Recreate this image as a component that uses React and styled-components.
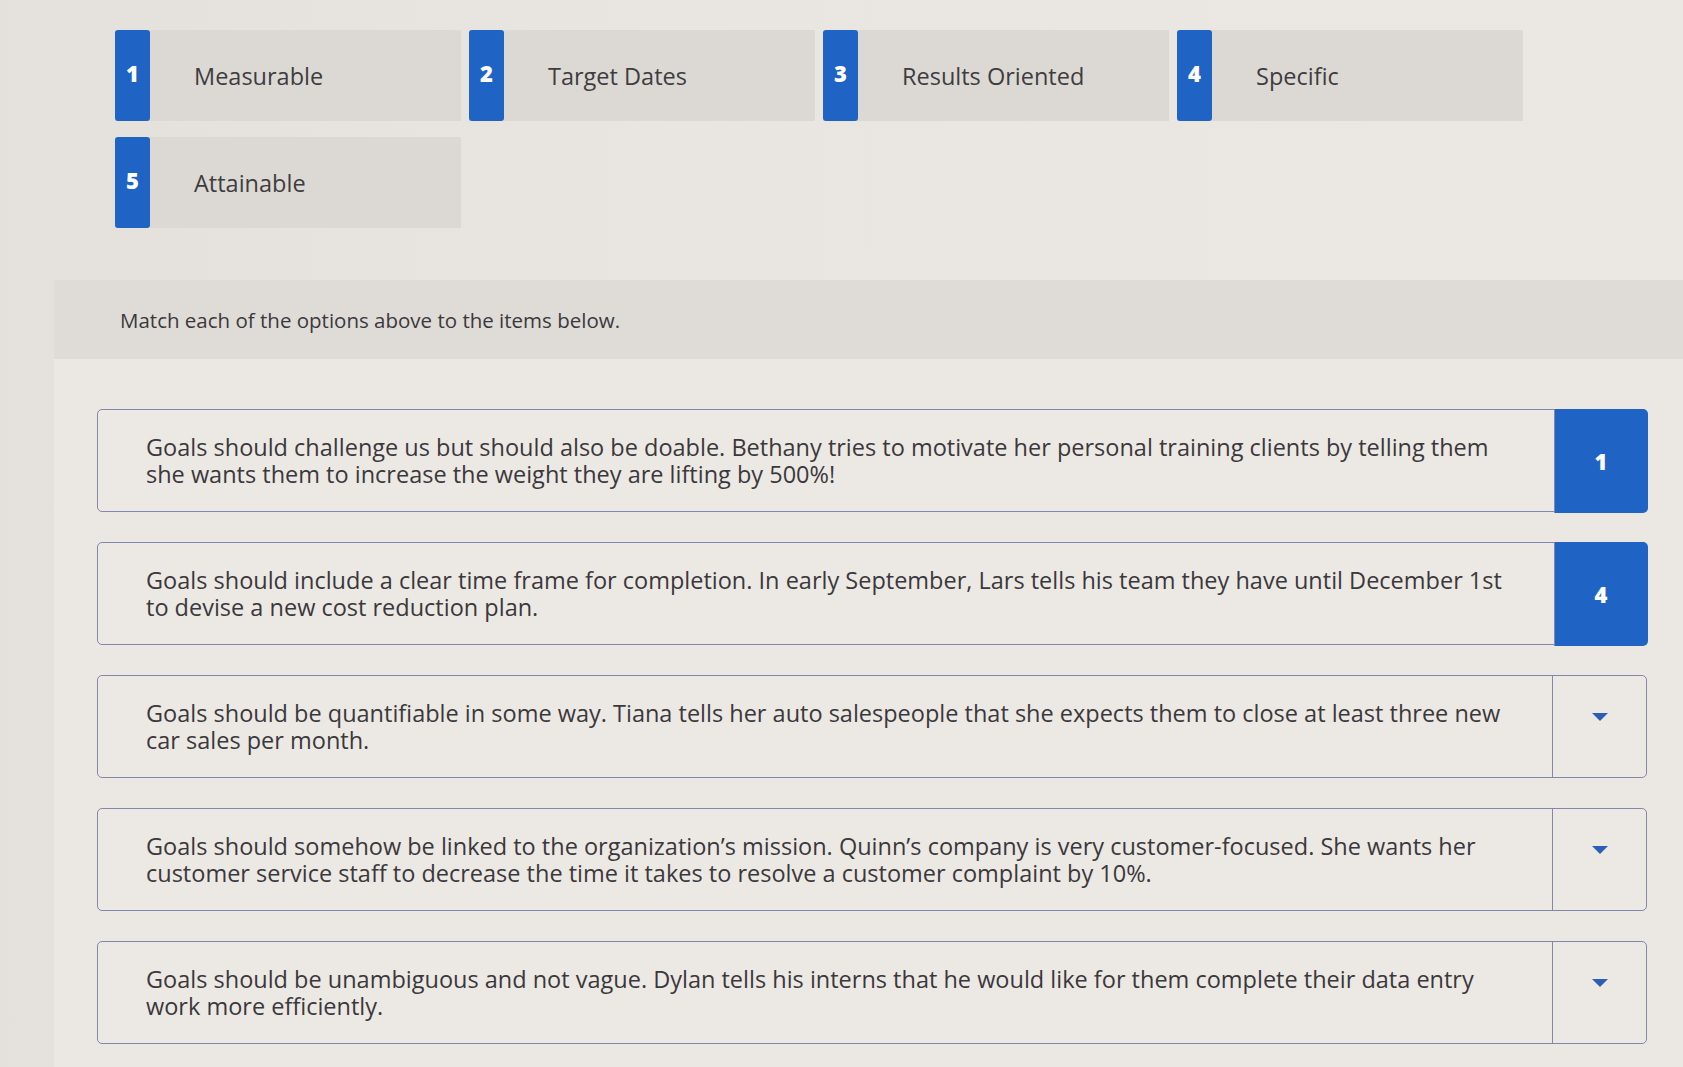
import React from 'react';
import styled, { createGlobalStyle } from 'styled-components';

const GlobalStyle = createGlobalStyle`
    html, body {
        margin: 0;
        padding: 0;
        background: #e6e3de;
    }
    body {
        font-family: "Open Sans", Lato, sans-serif;
        color: #3b383c;
    }
`;

const Page = styled.div`
    width: 1683px;
    min-height: 1067px;
    padding-top: 30px;
    box-sizing: border-box;
    background: linear-gradient(90deg, #e4e1dc 0%, #e9e6e1 40%, #ebe8e3 100%);
    overflow: hidden;
`;

const OptionGrid = styled.div`
    display: grid;
    grid-template-columns: repeat(4, 346px);
    column-gap: 8px;
    row-gap: 16px;
    padding-left: 115px;
`;

const Option = styled.div`
    display: flex;
    align-items: center;
    height: 91px;
    background: #dcd9d4;
`;

const Badge = styled.div`
    width: 35px;
    align-self: stretch;
    display: flex;
    align-items: center;
    justify-content: center;
    background: #1f64c4;
    color: #fff;
    font-weight: 800;
    font-size: 22px;
    border-radius: 3px;
    padding-bottom: 6px;
    box-sizing: border-box;
`;

const OptionLabel = styled.span`
    margin-left: 44px;
    font-size: 23.5px;
    color: #3f3c40;
`;

const Panel = styled.div`
    margin-left: 54px;
    margin-top: 52px;
    background: #ebe8e3;
    padding-bottom: 60px;
`;

const Instructions = styled.div`
    height: 79px;
    display: flex;
    align-items: center;
    padding-left: 66px;
    background: #dfdcd7;
    font-size: 20.5px;
    color: #3b383c;
`;

const MatchList = styled.div`
    display: flex;
    flex-direction: column;
    gap: 30px;
    margin: 50px 36px 0 43px;
`;

const MatchRow = styled.div`
    display: flex;
    height: 103px;
    border: 1.5px solid #8387ab;
    border-radius: 5px;
    background: #ece9e4;
    box-sizing: border-box;
`;

const MatchText = styled.div`
    flex: 1;
    padding: 24px 40px 0 48px;
    font-size: 23.5px;
    line-height: 27px;
    color: #3b383c;
`;

const Answer = styled.div`
    width: 94px;
    flex-shrink: 0;
    display: flex;
    justify-content: center;
    align-items: ${(p) => (p.$value ? 'center' : 'flex-start')};
    padding-top: ${(p) => (p.$value ? '0' : '37px')};
    box-sizing: border-box;
    margin: ${(p) => (p.$value ? '-1.5px -1.5px -1.5px 0' : '0')};
    border-left: 1.5px solid #8387ab;
    border-radius: 0 5px 5px 0;
    background: ${(p) => (p.$value ? '#1f64c4' : 'transparent')};
    color: #fff;
    font-weight: 800;
    font-size: 22px;
`;

const Caret = () => (
    <svg width="16" height="8" viewBox="0 0 16 8">
        <path d="M0 0 H16 L8 8 Z" fill="#2a5fb5" />
    </svg>
);

const options = ['Measurable', 'Target Dates', 'Results Oriented', 'Specific', 'Attainable'];

const items = [
    {
        text: 'Goals should challenge us but should also be doable. Bethany tries to motivate her personal training clients by telling them she wants them to increase the weight they are lifting by 500%!',
        answer: '1',
    },
    {
        text: 'Goals should include a clear time frame for completion. In early September, Lars tells his team they have until December 1st to devise a new cost reduction plan.',
        answer: '4',
    },
    {
        text: 'Goals should be quantifiable in some way. Tiana tells her auto salespeople that she expects them to close at least three new car sales per month.',
        answer: null,
    },
    {
        text: 'Goals should somehow be linked to the organization\u2019s mission. Quinn\u2019s company is very customer-focused. She wants her customer service staff to decrease the time it takes to resolve a customer complaint by 10%.',
        answer: null,
    },
    {
        text: 'Goals should be unambiguous and not vague. Dylan tells his interns that he would like for them complete their data entry work more efficiently.',
        answer: null,
    },
];

export default function App() {
    return (
        <Page>
            <GlobalStyle />
            <OptionGrid>
                {options.map((label, i) => (
                    <Option key={label}>
                        <Badge>{i + 1}</Badge>
                        <OptionLabel>{label}</OptionLabel>
                    </Option>
                ))}
            </OptionGrid>
            <Panel>
                <Instructions>Match each of the options above to the items below.</Instructions>
                <MatchList>
                    {items.map((item, i) => (
                        <MatchRow key={i}>
                            <MatchText>{item.text}</MatchText>
                            <Answer $value={item.answer}>
                                {item.answer ? item.answer : <Caret />}
                            </Answer>
                        </MatchRow>
                    ))}
                </MatchList>
            </Panel>
        </Page>
    );
}
